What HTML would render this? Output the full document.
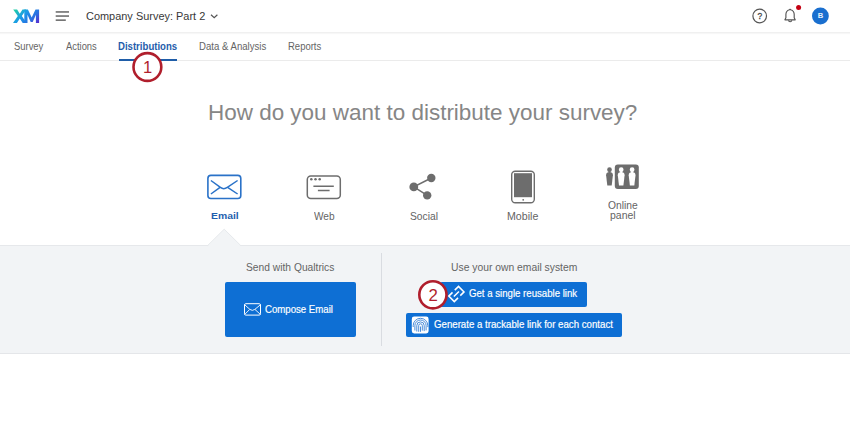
<!DOCTYPE html>
<html><head><meta charset="utf-8"><style>
html,body{margin:0;padding:0;width:850px;height:425px;overflow:hidden;background:#fff;position:relative}
.t{position:absolute;font-family:"Liberation Sans",sans-serif;white-space:nowrap}
svg{overflow:visible}
</style></head><body>
<div style="position:absolute;left:0;top:0;width:850px;height:32px;background:#fff;border-bottom:1px solid #f0f0f0;box-shadow:0 1px 1px rgba(0,0,0,0.03)"></div>
<svg style="position:absolute;left:0;top:0" width="850" height="32">
<defs><linearGradient id="xg" x1="14" y1="8" x2="34" y2="27" gradientUnits="userSpaceOnUse">
<stop offset="0" stop-color="#22d69c"/><stop offset="0.42" stop-color="#1a9be8"/><stop offset="0.75" stop-color="#2a6ee0"/><stop offset="1" stop-color="#5630d0"/></linearGradient></defs>
<path fill="url(#xg)" d="M13.2 9.4h3.9l2.7 4.4 2.7-4.4h3.8l-4.5 6.7 4.8 6.9h-3.9l-2.9-4.6-2.9 4.6h-3.9l4.8-6.9z"/>
<path fill="url(#xg)" d="M24.3 23V9.4h3.6l3.8 8.2 3.8-8.2h3.6V23h-3.2v-8.3l-3.2 7.2h-2l-3.2-7.2V23z"/>
<rect x="55.7" y="11.2" width="13.3" height="1.5" fill="#666"/>
<rect x="55.7" y="15.3" width="13.3" height="1.5" fill="#666"/>
<rect x="55.7" y="19.4" width="10.1" height="1.5" fill="#666"/>
<path d="M211 14.8l3.2 3 3.2-3" fill="none" stroke="#555" stroke-width="1.2"/>
<circle cx="759.7" cy="16" r="6.8" fill="none" stroke="#555" stroke-width="1.2"/>
<path d="M784.9 19.8h10.3l-1-2.1v-3.1c0-2.4-1.5-4.2-3.5-4.8l-0.65-0.5l-0.65 0.5c-2 0.6-3.5 2.4-3.5 4.8v3.1z" fill="none" stroke="#555" stroke-width="1.15" stroke-linejoin="round"/>
<path d="M788.6 20.2a1.5 1.5 0 0 0 3.1 0" fill="none" stroke="#555" stroke-width="1.1"/>
<circle cx="798.6" cy="7.6" r="2.5" fill="#c40012"/>
<circle cx="820.4" cy="16" r="8.4" fill="#1a6fcf"/>
</svg>
<div class="t" style="left:749.9px;width:20px;text-align:center;top:11.03px;font-size:8.4px;line-height:10.92px;color:#444;font-weight:400;-webkit-text-stroke:0.3px #444;">?</div>
<div class="t" style="left:810.6px;width:20px;text-align:center;top:11.43px;font-size:7.6px;line-height:9.88px;color:#e8f1fb;font-weight:700;">B</div>
<div class="t" style="left:85.65px;top:9.54px;font-size:10.5px;line-height:13.65px;color:#383838;font-weight:400;transform-origin:0 0;transform:scaleX(1.0424);">Company Survey: Part 2</div>
<div style="position:absolute;left:0;top:60px;width:850px;height:1px;background:#ebebeb"></div>
<div class="t" style="left:13.73px;top:39.84px;font-size:10.4px;line-height:13.52px;color:#646464;font-weight:400;transform-origin:0 0;transform:scaleX(0.9050);">Survey</div>
<div class="t" style="left:65.60px;top:39.84px;font-size:10.4px;line-height:13.52px;color:#646464;font-weight:400;transform-origin:0 0;transform:scaleX(0.9022);">Actions</div>
<div class="t" style="left:118.23px;top:39.94px;font-size:10.2px;line-height:13.26px;color:#1f5dab;font-weight:700;transform-origin:0 0;transform:scaleX(0.9415);">Distributions</div>
<div class="t" style="left:199.13px;top:39.84px;font-size:10.4px;line-height:13.52px;color:#646464;font-weight:400;transform-origin:0 0;transform:scaleX(0.9239);">Data &amp; Analysis</div>
<div class="t" style="left:288.04px;top:39.84px;font-size:10.4px;line-height:13.52px;color:#646464;font-weight:400;transform-origin:0 0;transform:scaleX(0.9133);">Reports</div>
<div style="position:absolute;left:118.9px;top:59px;width:58.1px;height:2px;background:#1f5da8"></div>
<div class="t" style="left:208.10px;top:98.58px;font-size:22.0px;line-height:28.6px;color:#868686;font-weight:400;transform-origin:0 0;transform:scaleX(1.0206);">How do you want to distribute your survey?</div>
<svg style="position:absolute;left:0;top:150px" width="850" height="60" viewBox="0 150 850 60">
<rect x="207.9" y="175.4" width="32.9" height="23.1" rx="3" fill="none" stroke="#2a72c8" stroke-width="1.6"/>
<path d="M210.9 180.5L220.4 187.4Q223.7 189.9 227.3 187.4L237.6 180.5M210.9 194L219.7 187.6M237.6 194L228 187.6" fill="none" stroke="#2a72c8" stroke-width="1.5"/>
<rect x="307.3" y="176" width="33" height="22.6" rx="3.5" fill="none" stroke="#6d6d6d" stroke-width="1.5"/>
<circle cx="311.3" cy="179.3" r="1.25" fill="#6d6d6d"/><circle cx="315.5" cy="179.3" r="1.25" fill="#6d6d6d"/><circle cx="319.7" cy="179.3" r="1.25" fill="#6d6d6d"/>
<path d="M313.4 186.2h20.4M317.9 190.4h11.7" stroke="#6d6d6d" stroke-width="1.5"/>
<path d="M431.3 178L413.8 186.9L427.2 195.4" fill="none" stroke="#6d6d6d" stroke-width="1.5"/>
<circle cx="431.3" cy="178" r="4.2" fill="#6d6d6d"/><circle cx="413.8" cy="186.9" r="4.4" fill="#6d6d6d"/><circle cx="427.2" cy="195.4" r="4.2" fill="#6d6d6d"/>
<rect x="511.7" y="171.3" width="22.6" height="31.4" rx="3.5" fill="none" stroke="#6d6d6d" stroke-width="1.4"/>
<rect x="514" y="173.2" width="18" height="24" fill="#6d6d6d"/>
<circle cx="523.2" cy="199.8" r="0.9" fill="#6d6d6d"/>
<circle cx="609.5" cy="169.7" r="2.35" fill="#6d6d6d"/>
<rect x="608.5" y="171" width="2" height="2" fill="#6d6d6d"/>
<path d="M606.10 175.2c0-1.8 0.9-2.9 2.6-2.9h1.6c1.7 0 2.6 1.1 2.6 2.9l-1.2 10.4h-4.4z" fill="#6d6d6d"/>
<rect x="614.8" y="164.4" width="24" height="24.6" rx="3" fill="#6d6d6d"/>
<circle cx="621.2" cy="169.7" r="2.35" fill="#fff"/>
<rect x="620.2" y="171" width="2" height="2" fill="#fff"/>
<path d="M617.80 175.2c0-1.8 0.9-2.9 2.6-2.9h1.6c1.7 0 2.6 1.1 2.6 2.9l-1.2 10.4h-4.4z" fill="#fff"/>
<circle cx="632.1" cy="169.7" r="2.35" fill="#fff"/>
<rect x="631.1" y="171" width="2" height="2" fill="#fff"/>
<path d="M628.70 175.2c0-1.8 0.9-2.9 2.6-2.9h1.6c1.7 0 2.6 1.1 2.6 2.9l-1.2 10.4h-4.4z" fill="#fff"/>
</svg>
<div class="t" style="left:210.57px;top:210.23px;font-size:9.6px;line-height:12.48px;color:#1f5fae;font-weight:700;transform-origin:0 0;transform:scaleX(1.0828);">Email</div>
<div class="t" style="left:313.60px;top:209.64px;font-size:10.2px;line-height:13.26px;color:#646464;font-weight:400;transform-origin:0 0;transform:scaleX(0.9902);">Web</div>
<div class="t" style="left:409.79px;top:209.64px;font-size:10.2px;line-height:13.26px;color:#646464;font-weight:400;transform-origin:0 0;transform:scaleX(1.0067);">Social</div>
<div class="t" style="left:507.25px;top:209.54px;font-size:10.2px;line-height:13.26px;color:#646464;font-weight:400;transform-origin:0 0;transform:scaleX(1.0430);">Mobile</div>
<div class="t" style="left:607.69px;top:198.64px;font-size:10.2px;line-height:13.26px;color:#646464;font-weight:400;transform-origin:0 0;transform:scaleX(1.0084);">Online</div>
<div class="t" style="left:609.77px;top:209.24px;font-size:10.2px;line-height:13.26px;color:#646464;font-weight:400;transform-origin:0 0;transform:scaleX(1.0271);">panel</div>
<div style="position:absolute;left:0;top:245px;width:850px;height:107px;background:#f2f4f6;border-top:1px solid #e6e8eb;border-bottom:1px solid #e4e6e9"></div>
<svg style="position:absolute;left:0;top:226px" width="850" height="22" viewBox="0 226 850 22">
<path d="M207.7 246L224.2 229.2L240.7 246z" fill="#f2f4f6"/>
<path d="M207.7 245.5L224.2 229.2L240.7 245.5" fill="none" stroke="#e6e9ec" stroke-width="1"/>
</svg>
<div style="position:absolute;left:380.8px;top:253px;width:1.2px;height:92.5px;background:#d9dce1"></div>
<div class="t" style="left:246.29px;top:260.84px;font-size:10.5px;line-height:13.65px;color:#646464;font-weight:400;transform-origin:0 0;transform:scaleX(0.9769);">Send with Qualtrics</div>
<div class="t" style="left:450.87px;top:260.84px;font-size:10.5px;line-height:13.65px;color:#646464;font-weight:400;transform-origin:0 0;transform:scaleX(0.9839);">Use your own email system</div>
<div style="position:absolute;left:224.5px;top:282px;width:131px;height:55px;background:#0e6fd4;border-radius:2px"></div>
<div style="position:absolute;left:440px;top:282.2px;width:146.5px;height:24.6px;background:#0e6fd4;border-radius:2px"></div>
<div style="position:absolute;left:406px;top:313px;width:216.4px;height:24px;background:#0e6fd4;border-radius:2px"></div>
<svg style="position:absolute;left:0;top:280px" width="850" height="60" viewBox="0 280 850 60">
<rect x="244.5" y="303.7" width="16" height="11.4" rx="1.3" fill="none" stroke="#fff" stroke-width="1"/>
<path d="M244.8 304.9L249.9 309.4Q252.4 311.4 254.8 309.4L260.3 304.9M244.8 314.3L249.6 309.5M260.3 314.3L255 309.5" fill="none" stroke="#fff" stroke-width="0.9"/>
<g transform="translate(456.4 294) rotate(-45)" fill="none" stroke="#fff" stroke-width="1.5">
<path d="M1.6 -3.9H6.9V3.9H1.6M-1.6 -3.9H-6.9V3.9H-1.6M-3.6 0H3.6"/>
</g>
<rect x="411.8" y="316.6" width="16.8" height="16.8" rx="2.4" fill="#fff"/>
<g fill="none" stroke="#2a78d2" stroke-width="0.85">
<path d="M420.5 331.8V326.5"/>
<path d="M418.7 331.8V325.6a1.8 1.8 0 0 1 3.6 0v5"/>
<path d="M416.8 331.5V325.6a3.7 3.7 0 0 1 7.4 0v5.5"/>
<path d="M414.9 330.5V325.6a5.6 5.6 0 0 1 11.2 0v4.8"/>
<path d="M413.2 327V325.6a7.3 7.3 0 0 1 14.6 0v1.5"/>
</g>
</svg>
<div class="t" style="left:265.32px;top:302.64px;font-size:10.5px;line-height:13.65px;color:#fff;font-weight:400;transform-origin:0 0;transform:scaleX(0.9167);-webkit-text-stroke:0.18px #fff;">Compose Email</div>
<div class="t" style="left:468.72px;top:287.34px;font-size:10.5px;line-height:13.65px;color:#fff;font-weight:400;transform-origin:0 0;transform:scaleX(0.9175);-webkit-text-stroke:0.18px #fff;">Get a single reusable link</div>
<div class="t" style="left:433.52px;top:318.04px;font-size:10.3px;line-height:13.39px;color:#fff;font-weight:400;transform-origin:0 0;transform:scaleX(0.9388);-webkit-text-stroke:0.18px #fff;">Generate a trackable link for each contact</div>
<svg style="position:absolute;left:0;top:0" width="850" height="425">
<circle cx="147.4" cy="67" r="13.9" fill="#fff" stroke="#b01e2c" stroke-width="2.6"/>
<circle cx="432.9" cy="294.8" r="13.6" fill="#fff" stroke="#b01e2c" stroke-width="2.6"/>
</svg>
<div class="t" style="left:132.6px;width:30px;text-align:center;top:57.06px;font-size:16.5px;line-height:21.45px;color:#b01e2c;font-weight:400;font-family:"Liberation Serif",serif;">1</div>
<div class="t" style="left:418.2px;width:30px;text-align:center;top:285.06px;font-size:16.8px;line-height:21.84px;color:#b01e2c;font-weight:400;font-family:"Liberation Serif",serif;">2</div>
</body></html>
